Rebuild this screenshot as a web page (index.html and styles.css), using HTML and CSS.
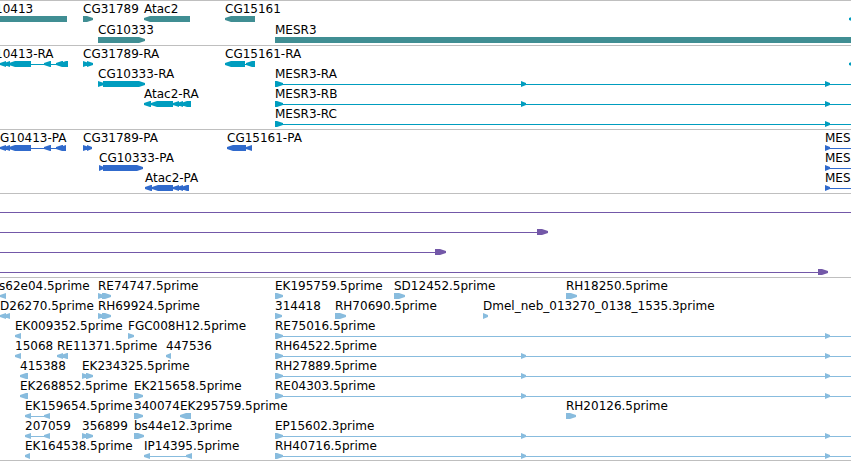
FILE: index.html
```html
<!DOCTYPE html>
<html lang="en">
<head>
  <meta charset="UTF-8" />
  <meta name="viewport" content="width=device-width, initial-scale=1.0" />
  <title>Genome Browser</title>
  <link rel="stylesheet" href="styles.css">
</head>
<body>
  <main id="browser">
    <section class="track gene" id="gene"></section>
    <section class="track mrna" id="mrna"></section>
    <section class="track protein" id="protein"></section>
    <section class="track cdna" id="cdna"></section>
    <section class="track est" id="est"></section>
  </main>
  <script src="script.js"></script>
</body>
</html>
```

FILE: styles.css
```css
/* CSS Variables */
:root {
  --border-color: #bfbfbf;
  --gene-color: #408e93;
  --mrna-color: #009dbf;
  --protein-color: #306acc;
  --cdna-color: #7358a8;
  --est-color: #88bcde;
}
/* Base Styles */
body {
  margin: 0;
  background-color: #ffffff;
  color: #000000;
  font-family: "DejaVu Sans", sans-serif;
  font-size: 12px;
}
#browser {
  overflow: hidden;
}
/* Tracks */
.track {
  border-top: 1px solid var(--border-color);
  padding-bottom: 3px;
}
.gene {
  color: var(--gene-color);
  padding-bottom: 2px;
}
.mrna {
  color: var(--mrna-color);
}
.protein {
  color: var(--protein-color);
}
.cdna {
  color: var(--cdna-color);
}
.est {
  color: var(--est-color);
  border-bottom: 1px solid var(--border-color);
  padding-bottom: 2px;
}
/* Rows of features */
.row {
  position: relative;
  height: 20px;
}
.gene .row {
  height: 21px;
}
.label {
  position: absolute;
  top: 0;
  line-height: 17px;
  white-space: nowrap;
  color: #000000;
}
.glyphs {
  display: block;
  width: 100%;
  height: 21px;
  fill: currentColor;
}
.glyphs .next {
  fill: var(--mrna-color);
}
```

FILE: script.js
```js
// Each feature: [label, label x, strand, exons, line start, line end, class]
const END = 4000;
const mesr3 = [[275, 283], [521, 526], [825, 830]];
const mesr3Short = [[275, 283], [825, 830]];

const tracks = {
  gene: [
    [
      ["10413", -5, "-", [[-40, 67]]],
      ["CG31789", 83, "+", [[83, 93]]],
      ["Atac2", 144, "-", [[144, 190]]],
      ["CG15161", 225, "-", [[225, 255]]],
      ["", 850, "-", [[849, 880]], 849, 880, "next"]
    ],
    [
      ["CG10333", 98, "+", [[98, 145]]],
      ["MESR3", 275, "+", [[275, END]]]
    ]
  ],
  mrna: [
    [
      ["10413-RA", -5, "-", [[0, 6], [4, 10], [9, 31], [44, 51], [56, 63], [60, 68]]],
      ["CG31789-RA", 83, "+", [[83, 89], [87, 93]]],
      ["CG15161-RA", 225, "-", [[225, 245], [246, 255]]],
      ["", 850, "-", [[849, 880]]]
    ],
    [
      ["CG10333-RA", 98, "+", [[98, 104], [103, 145]]],
      ["MESR3-RA", 275, "+", mesr3, 275, END]
    ],
    [
      ["Atac2-RA", 144, "-", [[144, 151], [151, 173], [173, 179], [177, 183], [181, 191]]],
      ["MESR3-RB", 275, "+", mesr3, 275, END]
    ],
    [
      ["MESR3-RC", 275, "+", mesr3Short, 275, END]
    ]
  ],
  protein: [
    [
      ["G10413-PA", 0, "-", [[0, 6], [4, 10], [9, 31], [44, 51], [56, 63], [60, 66]]],
      ["CG31789-PA", 83, "+", [[83, 89], [87, 92]]],
      ["CG15161-PA", 227, "-", [[227, 246], [246, 252]]],
      ["MESR3-PA", 825, "+", [[825, 830]], 825, END]
    ],
    [
      ["CG10333-PA", 99, "+", [[99, 104], [103, 143]]],
      ["MESR3-PB", 825, "+", [[825, 830]], 825, END]
    ],
    [
      ["Atac2-PA", 145, "-", [[145, 152], [152, 173], [173, 179], [177, 183], [181, 189]]],
      ["MESR3-PC", 825, "+", [[825, 830]], 825, END]
    ]
  ],
  cdna: [
    [["", 0, "+", [], 0, END]],
    [["", 0, "+", [[537, 548]], 0, 548]],
    [["", 0, "+", [[435, 446]], 0, 446]],
    [["", 0, "+", [[818, 828]], 0, 828]]
  ],
  est: [
    [
      ["s62e04.5prime", -1, "-", [[0, 6]]],
      ["RE74747.5prime", 98, "+", [[98, 104], [102, 111]]],
      ["EK195759.5prime", 275, "+", [[275, 283]]],
      ["SD12452.5prime", 394, "+", [[394, 405]]],
      ["RH18250.5prime", 566, "+", [[566, 577]]]
    ],
    [
      ["D26270.5prime", 0, "-", [[0, 6], [4, 10]]],
      ["RH69924.5prime", 98, "+", [[98, 104], [102, 111]]],
      ["314418", 275, "+", [[275, 282]]],
      ["RH70690.5prime", 335, "+", [[335, 346]]],
      ["Dmel_neb_013270_0138_1535.3prime", 483, "+", [[483, 488]]]
    ],
    [
      ["EK009352.5prime", 15, "-", [[15, 21]]],
      ["FGC008H12.5prime", 128, "+", [[128, 134]]],
      ["RE75016.5prime", 275, "+", mesr3Short, 275, END]
    ],
    [
      ["15068", 15, "-", [[15, 21]]],
      ["RE11371.5prime", 57, "-", [[57, 63], [61, 68]]],
      ["447536", 166, "-", [[166, 171]]],
      ["RH64522.5prime", 275, "+", mesr3, 275, END]
    ],
    [
      ["415388", 20, "-", [[20, 28]]],
      ["EK234325.5prime", 82, "+", [[82, 88], [86, 93]]],
      ["RH27889.5prime", 275, "+", mesr3, 275, END]
    ],
    [
      ["EK268852.5prime", 20, "-", [[20, 28]]],
      ["EK215658.5prime", 134, "+", [[134, 143]]],
      ["RE04303.5prime", 275, "+", mesr3, 275, END]
    ],
    [
      ["EK159654.5prime", 25, "-", [[25, 31], [44, 50]]],
      ["340074", 134, "+", [[134, 143]]],
      ["EK295759.5prime", 180, "-", [[180, 191]]],
      ["RH20126.5prime", 566, "+", [[566, 576]]]
    ],
    [
      ["207059", 25, "-", [[25, 31], [44, 50]]],
      ["356899", 82, "+", [[82, 88], [86, 93]]],
      ["bs44e12.3prime", 134, "+", [[134, 144]]],
      ["EP15602.3prime", 275, "+", mesr3, 275, END]
    ],
    [
      ["EK164538.5prime", 25, "-", [[25, 30]]],
      ["IP14395.5prime", 144, "-", [[144, 150], [186, 192]]],
      ["RH40716.5prime", 275, "+", mesr3, 275, END]
    ]
  ]
};

// Block with a pointed end in the direction of the strand
function exonPath(start, end, strand) {
  const tip = Math.min(6, end - start);
  if (strand === "+") {
    return `M${start} 15H${end - tip}L${end} 17V19L${end - tip} 21H${start}Z`;
  }
  return `M${start + tip} 15H${end}V21H${start + tip}L${start} 19V17Z`;
}

function drawFeature(row, svg, feature) {
  const [name, x, strand, exons, from, to, className] = feature;
  const lineStart = from === undefined ? exons[0][0] : from;
  const lineEnd = to === undefined ? exons[exons.length - 1][1] : to;
  let d = exons.map(([start, end]) => exonPath(start, end, strand)).join("");
  if (exons.length !== 1 || from !== undefined) {
    d += `M${lineStart} 18H${lineEnd}V19H${lineStart}Z`;
  }
  const path = document.createElementNS("http://www.w3.org/2000/svg", "path");
  path.setAttribute("d", d);
  if (className) path.setAttribute("class", className);
  svg.appendChild(path);

  if (name) {
    const label = document.createElement("span");
    label.className = "label";
    label.style.left = x + "px";
    label.textContent = name;
    row.appendChild(label);
  }
}

Object.keys(tracks).forEach((id) => {
  const track = document.getElementById(id);
  tracks[id].forEach((features) => {
    const row = document.createElement("div");
    row.className = "row";
    const svg = document.createElementNS("http://www.w3.org/2000/svg", "svg");
    svg.setAttribute("class", "glyphs");
    row.appendChild(svg);
    features.forEach((feature) => drawFeature(row, svg, feature));
    track.appendChild(row);
  });
});
```
